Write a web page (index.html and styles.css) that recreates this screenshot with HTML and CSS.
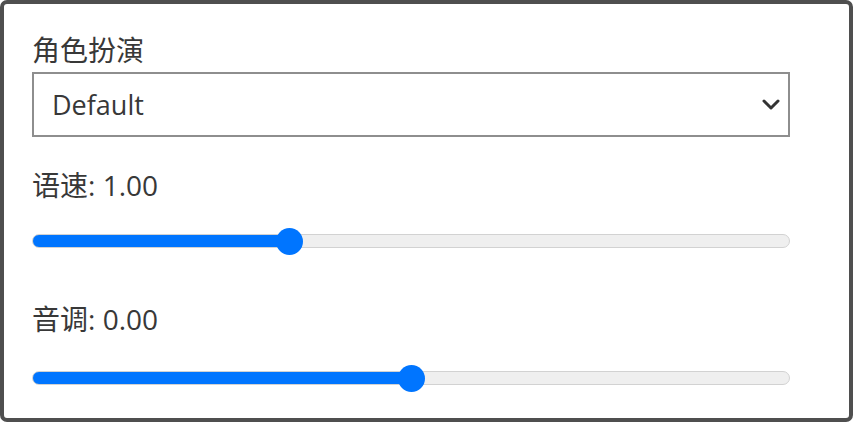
FILE: index.html
```html
<!DOCTYPE html>
<html lang="zh">
<head>
<meta charset="utf-8">
<title>语音设置</title>
<link rel="stylesheet" href="styles.css">
</head>
<body>
<div class="panel">
  <label class="label" for="role">角色扮演</label>
  <div class="select-wrap">
    <select id="role" class="select">
      <option>Default</option>
    </select>
    <svg class="chevron" width="18" height="11" viewBox="0 0 18 11"><path d="M2 2 L9 9 L16 2" fill="none" stroke="#333" stroke-width="3" stroke-linecap="round" stroke-linejoin="round"/></svg>
  </div>
  <label class="label label-rate" for="rate">语速: 1.00</label>
  <input id="rate" class="range" type="range" min="0.5" max="2" step="0.01" value="1" style="--p: 33.3%">
  <label class="label label-pitch" for="pitch">音调: 0.00</label>
  <input id="pitch" class="range range-pitch" type="range" min="-1" max="1" step="0.01" value="0" style="--p: 50%">
</div>
</body>
</html>
```
FILE: styles.css
```css
html, body {
  margin: 0;
  padding: 0;
  background: #ffffff;
}

.panel {
  box-sizing: border-box;
  width: 853px;
  height: 422px;
  border: 4px solid #4f4f4f;
  border-radius: 7px;
  padding: 28px 0 0 28px;
  display: flex;
  flex-direction: column;
  align-items: flex-start;
  font-family: "Open Sans", "Noto Sans CJK SC", sans-serif;
  color: #383838;
}

.label {
  font-size: 28px;
  line-height: 36px;
  display: block;
}

.select-wrap {
  position: relative;
  width: 758px;
  height: 65px;
  margin-top: 4px;
}

.select {
  -webkit-appearance: none;
  appearance: none;
  box-sizing: border-box;
  width: 100%;
  height: 100%;
  border: 2px solid #8e8e8e;
  border-radius: 0;
  background: #ffffff;
  padding: 0 0 0 18px;
  font-family: "Open Sans", "Noto Sans CJK SC", sans-serif;
  font-size: 27px;
  color: #383838;
  outline: none;
}

.chevron {
  position: absolute;
  right: 10px;
  top: 27px;
  pointer-events: none;
}

.label-rate {
  margin-top: 30px;
}

.label-pitch {
  margin-top: 46px;
}

.range {
  -webkit-appearance: none;
  appearance: none;
  width: 758px;
  height: 28px;
  margin: 24px 0 0 0;
  background: transparent;
  padding: 0;
}

.range-pitch {
  margin-top: 27px;
}

.range::-webkit-slider-runnable-track {
  height: 14px;
  border-radius: 7px;
  box-sizing: border-box;
  border: 1px solid #d2d2d2;
  background: linear-gradient(to right, #0075ff 0, #0075ff var(--p), #efefef var(--p), #efefef 100%);
}

.range::-webkit-slider-thumb {
  -webkit-appearance: none;
  appearance: none;
  width: 27px;
  height: 27px;
  border-radius: 50%;
  background: #0075ff;
  border: none;
  margin-top: -7.5px;
}
```
